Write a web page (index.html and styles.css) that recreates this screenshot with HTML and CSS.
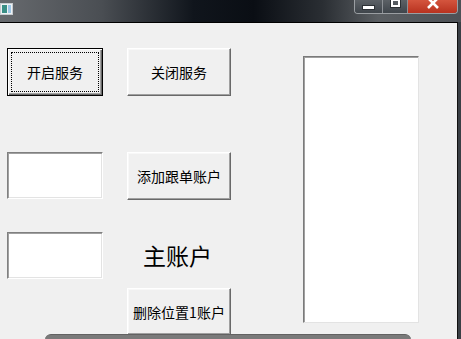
FILE: index.html
```html
<!DOCTYPE html>
<html lang="zh-CN">
    <head>
        <meta charset="UTF-8">
        <title>跟单</title>
        <link rel="stylesheet" href="styles.css">
    </head>
    <body>
        <div class="titlebar">
            <span class="appicon">
                <svg width="13" height="12" viewBox="0 0 13 12">
                    <rect x="0.5" y="0.5" width="12" height="11" fill="#eef2f4" stroke="#c8ccd0"/>
                    <rect x="2" y="2" width="5" height="8" fill="#3a8f86"/>
                    <rect x="8" y="2" width="3" height="8" fill="#9cc6e6"/>
                </svg>
            </span>
            <div class="controls">
                <span class="ctl min"><i class="bar"></i></span>
                <span class="ctl max"><i class="box"></i></span>
                <span class="ctl close">
                    <svg width="14" height="9" viewBox="0 0 14 9">
                        <path d="M2 -2 L12 8 M12 -2 L2 8" stroke="#fff" stroke-width="2.6" fill="none"/>
                    </svg>
                </span>
            </div>
        </div>

        <div class="frame">
            <div class="client">
                <div class="col left">
                    <button class="btn focused" type="button">开启服务</button>
                    <input class="field first" type="text">
                    <input class="field second" type="text">
                </div>
                <div class="col middle">
                    <button class="btn" type="button">关闭服务</button>
                    <button class="btn add" type="button">添加跟单账户</button>
                    <div class="caption">主账户</div>
                    <button class="btn remove" type="button">删除位置1账户</button>
                </div>
                <div class="col right">
                    <div class="listbox"></div>
                </div>
            </div>
            <div class="edge"></div>
        </div>

        <div class="taskbar"></div>
    </body>
</html>
```
FILE: styles.css
```css
html, body {
    margin: 0;
    height: 100%;
    overflow: hidden;
}
body {
    background: #3c4046;
    font-family: "Noto Sans CJK SC", "Noto Sans", sans-serif;
    position: relative;
}
.titlebar {
    height: 22px;
    display: flex;
    align-items: flex-start;
    background: linear-gradient(90deg, #676a6e 0%, #4a4e53 22%, #10151c 42%, #0a0e14 55%, #2a2e33 70%, #5a5e62 82%, #4d5156 100%);
}
.appicon {
    margin-top: 3px;
    line-height: 0;
}
.controls {
    margin-left: auto;
    margin-right: 3px;
    display: flex;
    height: 13px;
    border: 1px solid #9a9ea2;
    border-top: none;
    border-radius: 0 0 4px 4px;
    overflow: hidden;
}
.ctl {
    position: relative;
    display: flex;
    justify-content: center;
    background: linear-gradient(#5c6166, #3f454b);
}
.min {
    width: 27px;
    border-right: 1px solid #8d9196;
}
.max {
    width: 24px;
    border-right: 1px solid #8d9196;
}
.close {
    width: 49px;
    background: linear-gradient(#d4553e, #b8321f);
}
.bar {
    margin-top: 5px;
    width: 11px;
    height: 3px;
    background: #fff;
    border: 1px solid #2c3034;
}
.box {
    box-sizing: border-box;
    width: 9px;
    height: 7px;
    border: 2px solid #fff;
    border-top-width: 1px;
    outline: 1px solid #2c3034;
    margin-top: 0;
}
.frame {
    display: flex;
    height: calc(100% - 22px);
}
.client {
    flex: 1;
    background: #f0f0f0;
    border-top: 1px solid #000;
    border-right: 1px solid #111;
    display: flex;
    padding: 25px 0 0 7px;
}
.edge {
    width: 3px;
    background: #3a3f45;
}
.col {
    display: flex;
    flex-direction: column;
}
.left {
    width: 96px;
}
.middle {
    width: 104px;
    margin-left: 24px;
}
.right {
    width: 116px;
    margin-left: 72px;
}
.btn {
    box-sizing: border-box;
    width: 100%;
    height: 48px;
    padding: 0;
    background: #f0f0f0;
    font-family: "Noto Sans CJK SC", sans-serif;
    font-size: 14px;
    color: #000;
    border: 1px solid;
    border-color: #fff #696969 #696969 #fff;
    box-shadow: inset -1px -1px #a0a0a0, inset 1px 1px #f8f8f8;
    border-radius: 0;
}
.btn.focused {
    border-color: #000;
    box-shadow: inset 1px 1px #fff, inset -1px -1px #696969, inset -2px -2px #a0a0a0;
    outline: 1px dotted #000;
    outline-offset: -5px;
}
.btn.add {
    margin-top: 56px;
}
.btn.remove {
    height: 47px;
    margin-top: 16px;
}
.caption {
    margin-top: 38px;
    height: 34px;
    line-height: 34px;
    font-size: 23px;
    text-align: center;
    padding-right: 3px;
    color: #000;
}
.field {
    box-sizing: border-box;
    width: 96px;
    height: 47px;
    margin: 0;
    padding: 0;
    background: #fff;
    border: 1px solid;
    border-color: #808080 #fff #fff #808080;
    box-shadow: inset 1px 1px #a0a0a0, inset -1px -1px #e3e3e3;
    border-radius: 0;
}
.field.first {
    margin-top: 56px;
}
.field.second {
    margin-top: 33px;
}
.listbox {
    box-sizing: border-box;
    margin-top: 8px;
    height: 267px;
    background: #fff;
    border: 1px solid;
    border-color: #7a7a7a #e3e3e3 #e3e3e3 #7a7a7a;
    box-shadow: inset 1px 1px #a0a0a0;
}
.taskbar {
    position: absolute;
    left: 45px;
    top: 334px;
    width: 366px;
    height: 8px;
    background: #7a7a7a;
    border-top: 1px solid #626262;
    border-radius: 6px 6px 0 0;
}
```
